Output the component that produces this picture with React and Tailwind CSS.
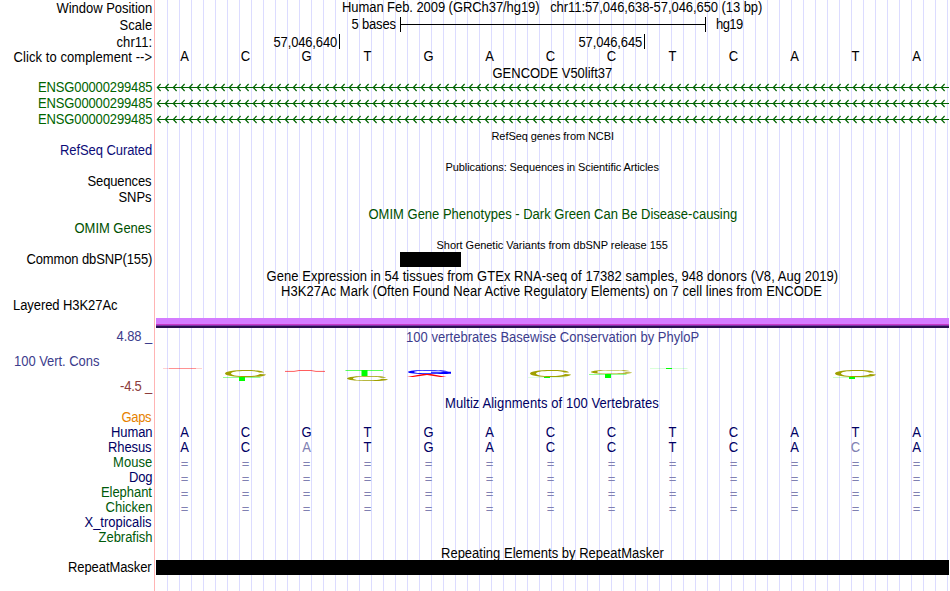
import React from "react";

const FAMILY = '"Liberation Sans", Arial, sans-serif';
const ctx = document.createElement("canvas").getContext("2d");

// Spaces a string so that its ink runs from x0 to x1 within its row.
function fit(text, size, x0, x1) {
  ctx.font = `${size}px ${FAMILY}`;
  const m = ctx.measureText(text);
  const ink = m.actualBoundingBoxRight + m.actualBoundingBoxLeft;
  return {
    letterSpacing: `${(x1 - x0 - ink) / Math.max(1, text.length - 1)}px`,
    marginLeft: `${x0 + m.actualBoundingBoxLeft}px`,
  };
}

function Text({ t, x0, x1, small, color = "text-black", origin = 0 }) {
  const size = small ? 11 : 13;
  return (
    <span
      className={`col-start-1 row-start-1 h-[15px] justify-self-start whitespace-pre ${small ? "text-[11px]" : "origin-[0_12px] scale-y-[1.07] text-[13px]"} leading-[15px] ${color}`}
      style={fit(t, size, x0 - origin, x1 - origin)}
    >
      {t}
    </span>
  );
}

const GREEN = "text-[#006400]";
const NAVY = "text-[#000064]";
const BLUE = "text-[#0c0c78]";

const labels = [
  [1, "Window Position", 56.5],
  [18, "Scale", 119.5],
  [35, "chr11:", 116.5, 151.5],
  [50, "Click to complement -->", 13.5, 151.5],
  [80, "ENSG00000299485", 39, 152.3, GREEN],
  [96, "ENSG00000299485", 39, 152.3, GREEN],
  [112, "ENSG00000299485", 39, 152.3, GREEN],
  [143, "RefSeq Curated", 61, 152, BLUE],
  [174, "Sequences", 87.5, 152],
  [190, "SNPs", 118.5, 152],
  [221, "OMIM Genes", 74.5, 152, "text-[#005000]"],
  [252, "Common dbSNP(155)", 26.5, 152],
  [298, "Layered H3K27Ac", 14, 118],
  [329, "4.88 _", 116.5, 153, "text-[#3c3c8c]"],
  [354, "100 Vert. Cons", 14, 100, "text-[#3c3c8c]"],
  [379, "-4.5 _", 120, 153, "text-[#8c3c3c]"],
  [410, "Gaps", 121.5, 152, "text-[#e68200]"],
  [425, "Human", 112, 152.3, NAVY],
  [440, "Rhesus", 109, 152, NAVY],
  [455, "Mouse", 114, 152, "text-[#005a0a]"],
  [470, "Dog", 130, 152.3, NAVY],
  [485, "Elephant", 102, 152.3, "text-[#005a0a]"],
  [500, "Chicken", 105.5, 152.3, "text-[#005a0a]"],
  [515, "X_tropicalis", 84.5, 152, NAVY],
  [530, "Zebrafish", 98.5, 152.3, "text-[#005a0a]"],
  [560, "RepeatMasker", 69, 152.3],
];

function Labels() {
  return (
    <div className="flex h-full w-[154px] shrink-0 flex-col pt-px">
      {labels.map(([y, t, x0, x1 = 152, color], i) => (
        <div key={i} className="grid shrink-0" style={{ height: (labels[i + 1]?.[0] ?? 591) - y }}>
          <Text t={t} x0={x0} x1={x1} color={color} />
        </div>
      ))}
    </div>
  );
}

function Bases({ seq, color = "text-black", faded = [], dy = false }) {
  return (
    <div className="col-start-1 row-start-1 grid w-[793px] grid-cols-[repeat(13,61px)]">
      {seq.split("").map((c, i) => (
        <span
          key={i}
          className={`h-[15px] w-[59px] text-center text-[13px] leading-[15px] ${dy ? "pt-px" : "origin-[0_12px] scale-y-[1.07]"} ${faded.includes(i) ? "text-[#8080b2]" : color}`}
        >
          {c}
        </span>
      ))}
    </div>
  );
}

function Intron() {
  const tips = Array.from({ length: 99 }, (_, i) => 2 + i * 8);
  return (
    <svg className="block h-[9px] w-[794px] text-[#006400]" viewBox="0 0 794 9" fill="none" stroke="currentColor">
      <path d="M2 4.5H794" shapeRendering="crispEdges" />
      <path d={tips.map((x) => `M${x + 3.6} 1L${x + 0.3} 4.5L${x + 3.6} 8`).join("")} strokeWidth="1.15" />
    </svg>
  );
}

function CGlyph({ x, y, h, op = 1 }) {
  return (
    <g transform={`translate(${x} ${y}) scale(1 ${h / 7})`} fill="#a0a000" opacity={op}>
      <path d="M39 2.4C38 .6 30 0 21 0C9 0 0 1.2 0 3.5C0 5.8 9 7 21 7C32 7 40 6.4 41 4.4L35 4C33 5.5 28 6.1 21 6.1C11 6.100 6 5.2 6 3.5C6 1.8 11 .9 21 .9C28 .9 32 1.3 34 2.4Z" />
    </g>
  );
}

function TGlyph({ x, y, h, bar = 0.7, op = 0.6 }) {
  return (
    <g fill="#00ff00">
      <rect x={x} y={y} width="37.5" height={bar} opacity={op} />
      <rect x={x + 16} y={y} width="6" height={h} />
    </g>
  );
}

// Sequence logo of the conservation scores, in window coordinates.
function Logo() {
  return (
    <svg className="block h-[51px] w-[794px]" viewBox="155 345 794 51">
      <path d="M163 368.5H202" stroke="#ff0000" strokeWidth="0.3" opacity=".6" />
      <path d="M169 368.5H196" stroke="#ff0000" strokeWidth="0.5" opacity=".6" />
      <CGlyph x={225} y={370} h={7} />
      <TGlyph x={223} y={377} h={4} />
      <path d="M285 371.4H294L299 370.500H311L316 371.400H325" fill="none" stroke="#ff0000" strokeWidth="0.75" opacity=".85" />
      <TGlyph x={345.5} y={370} h={6} bar={0.8} op={0.8} />
      <CGlyph x={347} y={376} h={5} />
      <path
        d="M449 371.6C445 370.3 438 370 429 370C416 370 408 370.700 408 372C408 373.500 417 374 429 374C439 374 446 373.900 451 373.700V371.800H431V372.700H443C440 373.200 435 373.300 429 373.300C419 373.300 414 372.900 414 372C414 371.200 419 370.700 429 370.700C437 370.700 442 371 444 371.600Z"
        fill="#0000ff"
      />
      <path d="M407 377L423 374H431L446.500 377H440L427 374.900L413 377Z" fill="#ff0000" />
      <CGlyph x={530} y={370} h={7} />
      <TGlyph x={528} y={377} h={1} bar={0.4} op={0.3} />
      <CGlyph x={591} y={370} h={4} />
      <TGlyph x={589} y={374} h={4} />
      <TGlyph x={650} y={368} h={1} bar={0.5} op={0.3} />
      <CGlyph x={835} y={370} h={7} />
      <TGlyph x={833} y={377} h={2} bar={0.5} op={0.4} />
    </svg>
  );
}

function R(props) {
  return <Text {...props} origin={155} />;
}

function Ruler() {
  return (
    <div className="col-start-1 row-start-1 ml-[245px] flex h-[15px] w-[306px] items-center border-x border-black">
      <div className="h-px w-full bg-black" />
    </div>
  );
}

function Tick({ className }) {
  return <div className={`col-start-1 row-start-1 -mt-px h-[15px] w-px bg-black ${className}`} />;
}

const EQ = "=============";

const tracks = [
  [0, <R t="Human Feb. 2009 (GRCh37/hg19)   chr11:57,046,638-57,046,650 (13 bp)" x0={343} x1={762} />],
  [17, <><R t="5 bases" x0={351.5} x1={396.5} /><Ruler /><R t="hg19" x0={716} x1={743} /></>],
  [35, <><R t="57,046,640" x0={273.5} x1={337} /><Tick className="ml-[184px]" /><R t="57,046,645" x0={578.5} x1={642} /><Tick className="ml-[489px]" /></>],
  [49, <Bases seq="ACGTGACCTCATA" />],
  [66, <R t="GENCODE V50lift37" x0={492.5} x1={612} />],
  [83, <Intron />],
  [99, <Intron />],
  [115, <Intron />],
  [129, <R small t="RefSeq genes from NCBI" x0={491.5} x1={614} />],
  [160, <R small t="Publications: Sequences in Scientific Articles" x0={445.5} x1={660} />],
  [207, <R t="OMIM Gene Phenotypes - Dark Green Can Be Disease-causing" x0={368.5} x1={737} color="text-[#005000]" />],
  [238, <R small t="Short Genetic Variants from dbSNP release 155" x0={436.5} x1={668} />],
  [252, <div className="ml-[245px] h-[15px] w-[61px] bg-black" />],
  [269, <R t="Gene Expression in 54 tissues from GTEx RNA-seq of 17382 samples, 948 donors (V8, Aug 2019)" x0={266.5} x1={838.5} />],
  [284, <R t="H3K27Ac Mark (Often Found Near Active Regulatory Elements) on 7 cell lines from ENCODE" x0={282} x1={823} />],
  [318, <div className="ml-px flex w-[793px] flex-col"><i className="h-1.5 bg-[#d47cff]" /><i className="h-px bg-[#c738c8]" /><i className="h-px bg-[#7c36a8]" /><i className="h-0.5 bg-[#2c1052]" /></div>],
  [330, <R t="100 vertebrates Basewise Conservation by PhyloP" x0={406} x1={698.5} color="text-[#3c3c8c]" />],
  [345, <Logo />],
  [396, <R t="Multiz Alignments of 100 Vertebrates" x0={446} x1={660} color={NAVY} />],
  [425, <Bases seq="ACGTGACCTCATA" color={NAVY} />],
  [440, <Bases seq="ACATGACCTCACA" color={NAVY} faded={[2, 11]} />],
  [455, <Bases seq={EQ} color="text-[#8080b2]" dy />],
  [470, <Bases seq={EQ} color="text-[#8080b2]" dy />],
  [485, <Bases seq={EQ} color="text-[#8080b2]" dy />],
  [500, <Bases seq={EQ} color="text-[#8080b2]" dy />],
  [546, <R t="Repeating Elements by RepeatMasker" x0={442} x1={664.5} />],
  [560, <div className="ml-px h-[15px] w-[793px] bg-black" />],
];

export default function App() {
  return (
    <main className="flex h-[591px] w-[950px] overflow-hidden bg-white font-['Liberation_Sans',Arial,sans-serif]">
      <Labels />
      <div className="w-px shrink-0 bg-[#ffb4b4]" />
      <div className="flex w-[794px] shrink-0 flex-col bg-[repeating-linear-gradient(to_right,#dcdcff_0_1px,transparent_1px_12px)] bg-[position:12px_0] bg-no-repeat">
        {tracks.map(([y, content], i) => (
          <div key={y} className="grid shrink-0 items-start" style={{ height: (tracks[i + 1]?.[0] ?? 591) - y }}>
            {content}
          </div>
        ))}
      </div>
    </main>
  );
}
